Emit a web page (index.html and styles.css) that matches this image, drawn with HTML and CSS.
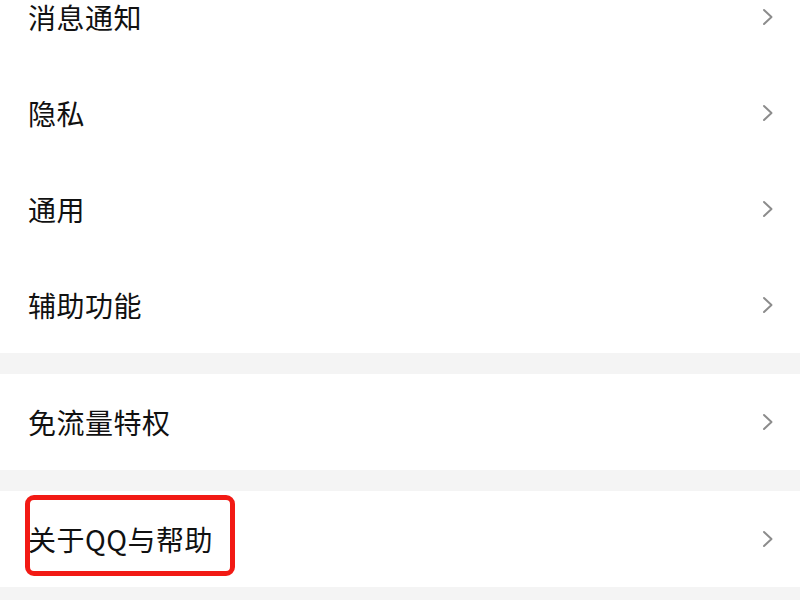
FILE: index.html
```html
<!DOCTYPE html>
<html lang="zh">
<head>
<meta charset="utf-8">
<link rel="stylesheet" href="styles.css">
</head>
<body>
<div class="page">
  <div class="group">
    <div class="row"><span class="label">消息通知</span><svg class="chev" viewBox="0 0 12 18"><path d="M2 2 L9.5 9 L2 16" /></svg></div>
    <div class="row"><span class="label">隐私</span><svg class="chev" viewBox="0 0 12 18"><path d="M2 2 L9.5 9 L2 16" /></svg></div>
    <div class="row"><span class="label">通用</span><svg class="chev" viewBox="0 0 12 18"><path d="M2 2 L9.5 9 L2 16" /></svg></div>
    <div class="row"><span class="label">辅助功能</span><svg class="chev" viewBox="0 0 12 18"><path d="M2 2 L9.5 9 L2 16" /></svg></div>
  </div>
  <div class="gap"></div>
  <div class="group">
    <div class="row"><span class="label">免流量特权</span><svg class="chev" viewBox="0 0 12 18"><path d="M2 2 L9.5 9 L2 16" /></svg></div>
  </div>
  <div class="gap"></div>
  <div class="group">
    <div class="row"><span class="label highlight">关于QQ与帮助</span><svg class="chev" viewBox="0 0 12 18"><path d="M2 2 L9.5 9 L2 16" /></svg></div>
  </div>
  <div class="gap tail"></div>
</div>
</body>
</html>
```
FILE: styles.css
```css
html, body {
  margin: 0;
  padding: 0;
  background: #ffffff;
  overflow: hidden;
  width: 800px;
  height: 600px;
}
.page {
  margin-top: -31px;
  display: flex;
  flex-direction: column;
  font-family: "Noto Sans CJK SC", "Noto Sans", sans-serif;
}
.group {
  display: flex;
  flex-direction: column;
  background: #ffffff;
}
.row {
  height: 96px;
  display: flex;
  align-items: center;
  justify-content: space-between;
  padding: 0 26px 0 28px;
}
.label {
  font-size: 28px;
  color: #111111;
  letter-spacing: 0.5px;
  line-height: 40px;
}
.highlight {
  position: relative;
}
.highlight::after {
  content: "";
  position: absolute;
  left: -3px;
  top: -24px;
  width: 200px;
  height: 71px;
  border: 5px solid #f21a14;
  border-radius: 9px;
}
.chev {
  width: 12px;
  height: 18px;
  fill: none;
  stroke: #8c8c8c;
  stroke-width: 2;
  stroke-linecap: round;
  stroke-linejoin: round;
}
.gap {
  height: 21px;
  background: #f4f4f4;
}
.tail {
  height: 40px;
}
```
